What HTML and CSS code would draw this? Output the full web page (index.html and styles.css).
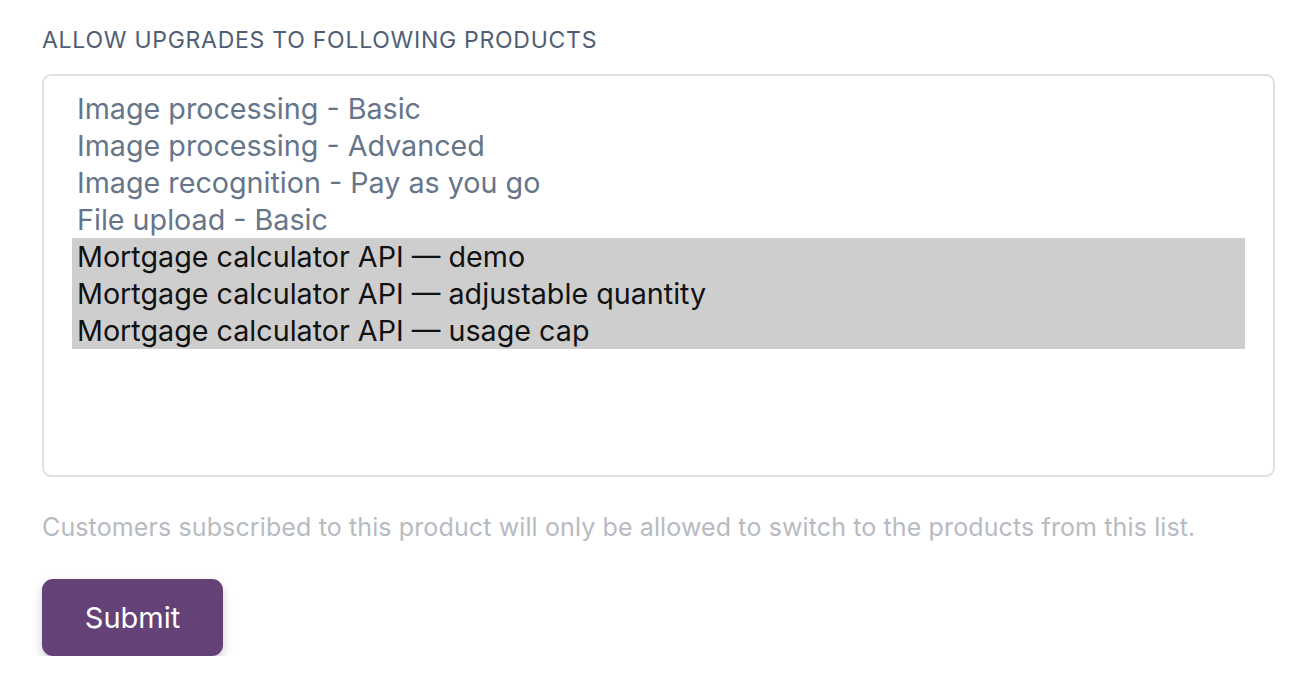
FILE: index.html
```html
<!DOCTYPE html>
<html lang="en">
<head>
<meta charset="utf-8">
<title>Allow upgrades</title>
<link rel="stylesheet" href="styles.css">
</head>
<body>
<form class="form">
  <label class="field-label">Allow upgrades to following products</label>
  <div class="listbox" role="listbox" aria-multiselectable="true">
    <div class="option" role="option">Image processing - Basic</div>
    <div class="option" role="option">Image processing - Advanced</div>
    <div class="option" role="option">Image recognition - Pay as you go</div>
    <div class="option" role="option">File upload - Basic</div>
    <div class="option selected" role="option" aria-selected="true">Mortgage calculator API — demo</div>
    <div class="option selected" role="option" aria-selected="true">Mortgage calculator API — adjustable quantity</div>
    <div class="option selected" role="option" aria-selected="true">Mortgage calculator API — usage cap</div>
  </div>
  <p class="help">Customers subscribed to this product will only be allowed to switch to the products from this list.</p>
  <button type="button" class="btn-submit">Submit</button>
</form>
</body>
</html>
```
FILE: styles.css
```css
html, body {
  margin: 0;
  padding: 0;
  background: #ffffff;
}
body {
  font-family: Inter, "Noto Sans", sans-serif;
}
.form {
  display: flex;
  flex-direction: column;
  align-items: flex-start;
  padding: 26px 41px 0 42px;
}
.field-label {
  font-size: 23px;
  line-height: 28px;
  font-weight: 400;
  letter-spacing: 0.74px;
  text-transform: uppercase;
  color: #4f5e74;
}
.listbox {
  align-self: stretch;
  margin-top: 20px;
  height: 403px;
  box-sizing: border-box;
  border: 2px solid #dfe0e3;
  border-radius: 9px;
  padding: 14px 28px 0 28px;
}
.option {
  height: 37px;
  line-height: 37px;
  padding-left: 5px;
  font-size: 28.7px;
  color: #66758a;
  white-space: nowrap;
}
.option.selected {
  background: #cecece;
  color: #111111;
}
.help {
  margin: 35px 0 0 0;
  font-size: 25px;
  line-height: 30px;
  letter-spacing: 0.12px;
  color: #b7bbc1;
}
.btn-submit {
  margin-top: 37px;
  width: 181px;
  height: 77px;
  border: 0;
  border-radius: 11px;
  background: #644176;
  color: #ffffff;
  font-family: inherit;
  font-size: 29px;
  box-shadow: 0 5px 10px rgba(100, 65, 118, 0.28);
}
```
